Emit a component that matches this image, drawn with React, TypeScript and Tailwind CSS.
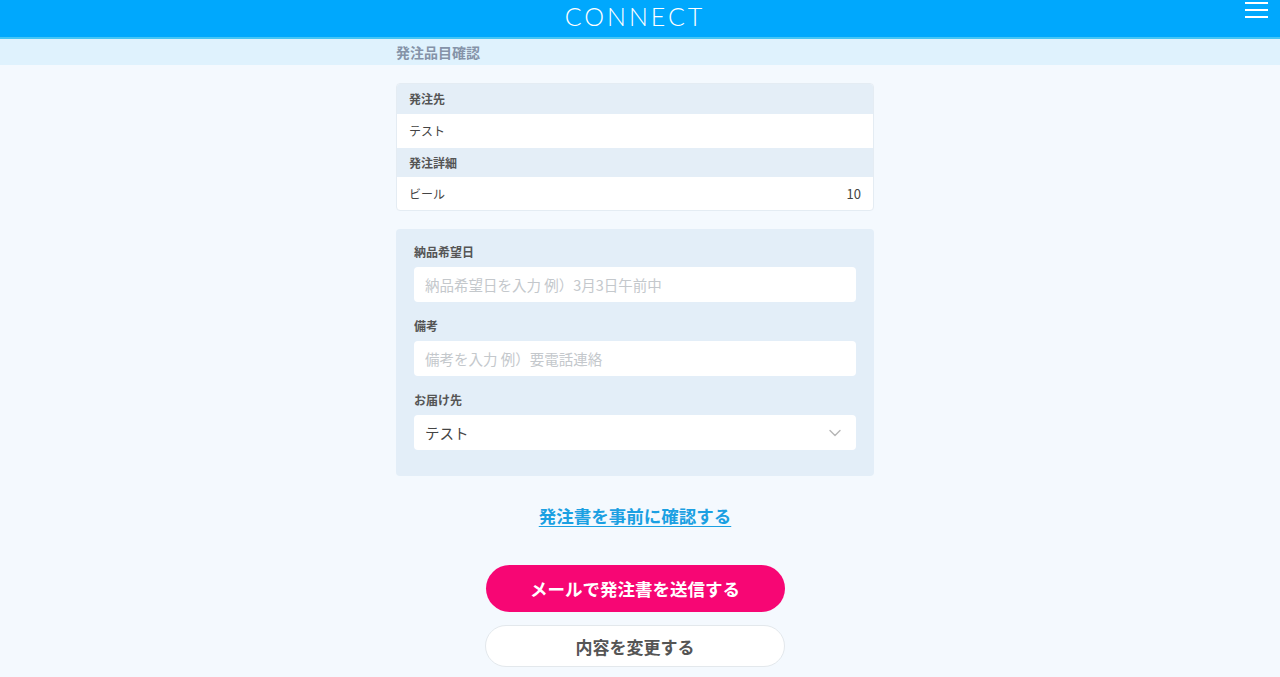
import { ChevronDown } from "lucide-react";

const font = { fontFamily: '"Noto Sans CJK JP", "Noto Sans", sans-serif' };

export default function App() {
  return (
    <div className="min-h-[677px] bg-[#f4f9fe]" style={font}>
      {/* header */}
      <header className="relative h-[39px] bg-[#00a8fd] border-b-2 border-[#45c6f5] flex items-center justify-center pr-[10px] pb-[4px]">
        <h1 className="text-white text-[25px] font-light tracking-[0.12em] leading-none font-['Lato',sans-serif]">
          CONNECT
        </h1>
        <button className="absolute right-[12px] top-[2px] flex flex-col gap-[5px] p-0">
          <span className="block w-[23px] h-[2px] bg-white" />
          <span className="block w-[23px] h-[2px] bg-white" />
          <span className="block w-[23px] h-[2px] bg-white" />
        </button>
      </header>

      <div className="h-[26px] bg-[#dff2fd] pr-[10px]">
        <div className="w-[478px] mx-auto h-full flex items-center">
          <span className="text-[14px] font-bold text-[#8593a8]">発注品目確認</span>
        </div>
      </div>

      <div className="pr-[10px]">
        <main className="w-[478px] mx-auto pt-[18px] pb-[10px]">
          {/* summary card */}
          <div className="rounded-[4px] border border-[#e4ecf3] bg-white overflow-hidden text-[12px] text-[#444]">
            <div className="h-[30px] bg-[#e4eef7] px-[12px] flex items-center font-bold text-[#555]">発注先</div>
            <div className="h-[34px] px-[12px] flex items-center">テスト</div>
            <div className="h-[29px] bg-[#e4eef7] px-[12px] flex items-center font-bold text-[#555]">発注詳細</div>
            <div className="h-[33px] px-[12px] flex items-center justify-between">
              <span>ビール</span>
              <span className="text-[13px]">10</span>
            </div>
          </div>

          {/* form panel */}
          <div className="mt-[18px] rounded-[4px] bg-[#e3eef8] px-[18px] pt-[14px] pb-[26px]">
            <label className="block text-[12px] font-bold text-[#555] leading-[18px]">納品希望日</label>
            <input
              className="mt-[6px] w-full h-[35px] rounded-[4px] bg-white px-[11px] text-[14.5px] outline-none placeholder-[#c4c8cc]"
              placeholder="納品希望日を入力 例）3月3日午前中"
            />
            <label className="block mt-[15px] text-[12px] font-bold text-[#555] leading-[18px]">備考</label>
            <input
              className="mt-[6px] w-full h-[35px] rounded-[4px] bg-white px-[11px] text-[14.5px] outline-none placeholder-[#c4c8cc]"
              placeholder="備考を入力 例）要電話連絡"
            />
            <label className="block mt-[15px] text-[12px] font-bold text-[#555] leading-[18px]">お届け先</label>
            <div className="mt-[6px] w-full h-[35px] rounded-[4px] bg-white px-[11px] flex items-center justify-between">
              <span className="text-[14.5px] text-[#444]">テスト</span>
              <ChevronDown className="w-[20px] h-[20px] text-[#b8b8b8]" strokeWidth={1.75} />
            </div>
          </div>

          <div className="mt-[27px] flex justify-center">
            <a className="text-[17.5px] font-bold text-[#1ba0e2] underline underline-offset-[3px] cursor-pointer">
              発注書を事前に確認する
            </a>
          </div>

          <div className="mt-[36px] flex flex-col items-center gap-[13px]">
            <button className="w-[299px] h-[47px] rounded-full bg-[#f70674] text-white text-[17.5px] font-bold">
              メールで発注書を送信する
            </button>
            <button className="w-[300px] h-[42px] rounded-full bg-white border border-[#e3e8ec] text-[#555] text-[17px] font-bold">
              内容を変更する
            </button>
          </div>
        </main>
      </div>
    </div>
  );
}
